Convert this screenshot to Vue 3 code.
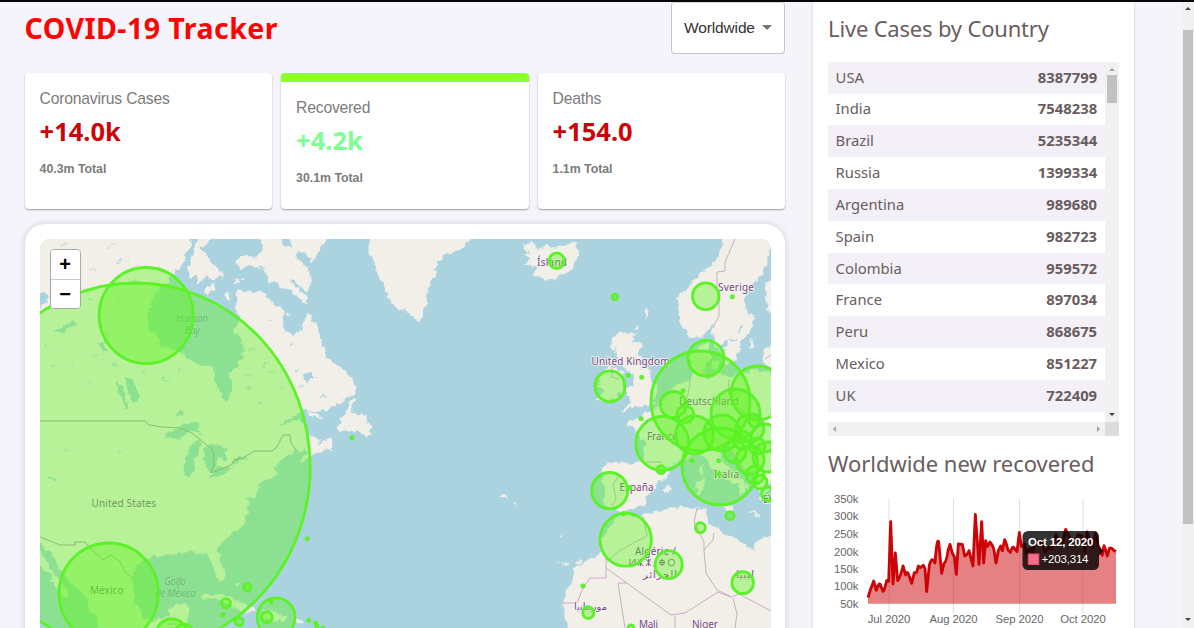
<script setup>
const stats = [
  { title: 'Coronavirus Cases', value: '+14.0k', total: '40.3m Total', kind: 'cases' },
  { title: 'Recovered', value: '+4.2k', total: '30.1m Total', kind: 'recovered' },
  { title: 'Deaths', value: '+154.0', total: '1.1m Total', kind: 'deaths' },
]
const countries = [
  ['USA', 8387799], ['India', 7548238], ['Brazil', 5235344], ['Russia', 1399334],
  ['Argentina', 989680], ['Spain', 982723], ['Colombia', 959572], ['France', 897034],
  ['Peru', 868675], ['Mexico', 851227], ['UK', 722409], ['South Africa', 703793],
]
// cx, cy, rx, ry
const circles = [
  [135.5, 467, 174.7, 184], [146.2, 315.5, 47, 48], [108.7, 593.5, 49.7, 50.5],
  [171.7, 635, 16, 16], [184, 633, 9, 9], [247.3, 587.3, 3.7, 3.7], [226, 603.3, 4.6, 4.6],
  [239.3, 621.7, 4, 4], [276, 617.3, 19, 19.5], [266.7, 617.3, 5.5, 5.5],
  [556.7, 260.7, 7.6, 7.8], [615, 297, 2.8, 2.8], [610, 386.3, 15, 15.5], [705.7, 296.3, 13.2, 13.4],
  [706, 358.3, 18, 18], [700.5, 401, 49.5, 50], [758, 393, 27, 27], [735.5, 414, 24.5, 25],
  [673.3, 404.5, 13, 13], [685.3, 414.3, 8.5, 8.5], [662.3, 443.5, 26.5, 27], [694.5, 435, 19, 19],
  [720, 466.5, 38, 38.5], [722, 433, 18, 18], [735, 451.7, 11, 11], [750, 460, 14, 14],
  [750, 428, 14, 14], [765, 438, 14, 14], [768, 457, 15, 15], [755, 475, 9, 9], [760, 482, 7, 7],
  [757, 446, 8, 8], [755, 421, 6, 6], [742, 440, 9, 9],
  [768, 494, 6.5, 7], [609.7, 490.7, 18, 18.2], [661, 469.7, 4, 4], [625.7, 539.7, 25.7, 26.5],
  [668.7, 564.7, 13.5, 14], [700.3, 527.7, 5, 5], [730, 515.7, 4, 4], [742.7, 582.7, 10.8, 11],
  [588.3, 612.7, 5.6, 5.8], [631, 628, 3, 3],
]
const dots = [
  [223, 614.7], [271, 602], [308.7, 620.3], [315.5, 623], [317, 626], [322.7, 628], [307.3, 538.7],
  [352, 437.7], [732.3, 296.7], [683, 390.7], [628.3, 375.3], [641.7, 377.3], [641, 418.7],
  [630, 487.7], [623.3, 513.7], [583, 586], [692, 460.7], [718.7, 460.7], [719, 474],
]
const lakes = [
  'M53 333l10-6 8-5 7 3-8 2-10 7-3-1z', 'M125 378l6 0 7 13 0 10-6 2-4-10z', 'M117 380l5 8 7 22-3-2-8-18z',
  'M162 439l9-8 14-7 12 0 4 11-8-5-14 7-5 1z', 'M189 447l8-6 5 1-5 9-4 22-6 3-4-6z',
  'M204 447l9-3 13 3 0 14-8-6-2 16-8 1-4-8z', 'M209 475l12-8 12 0-10 8-13 3z', 'M231 461l10-4 7 1-9 5-8 2z',
  'M48 475l7 4 0 4-6-4z', 'M178 410l5 2-2 6-4-3z', 'M303 375l7-2 5 5-6 1-4 6z', 'M99 345l6 8 3-2-5-11z',
]
const specks = [
  [60, 247, 8], [90, 270, 5], [106, 248, 9], [118, 263, 12], [134, 268, 7], [130, 281, 9], [152, 270, 10],
  [88, 300, 5], [96, 316, 6], [119, 299, 5], [131, 301, 4], [70, 363, 4], [86, 385, 5], [112, 365, 5],
  [141, 373, 5], [160, 380, 8], [178, 371, 4], [248, 350, 8], [262, 366, 7], [247, 389, 7], [266, 374, 9],
  [281, 366, 6], [257, 404, 5], [279, 388, 5], [267, 322, 5], [289, 344, 4], [298, 388, 4], [320, 396, 6],
  [64, 450, 4], [117, 453, 5], [92, 358, 5], [45, 345, 4], [51, 366, 3], [104, 332, 5], [296, 370, 4], [245, 376, 6],
]
const yTicks = [['350k', 503], ['300k', 520], ['250k', 537.5], ['200k', 555.5], ['150k', 573], ['100k', 590], ['50k', 607.7]]
const xTicks = [['Jul 2020', 889, 42.5], ['Aug 2020', 953.5, 48], ['Sep 2020', 1019.5, 48], ['Oct 2020', 1083, 45.5]]
const line = 'M204 563Q210 540 221 513L229 541Q237 515 241 524L249 544Q254 540 260 512L266 514 272 335 279 522 286 429 293 512Q300 505 309 468L317 495Q322 480 326 494L335 520 343 488 350 487 355 468 361 473 370 466 375 475 380 545 388 466Q394 445 399 450L405 459Q411 380 416 396L425 490 432 460Q440 455 444 422L450 403 457 430 463 440 469 493 475 402 487 403 494 438Q503 435 507 422L519 468 526 313 537 463 545 335 551 459 557 392 563 409 570 396Q578 405 582 420L588 459 595 422 602 408 607 422 614 389Q620 402 624 420L631 427Q638 405 642 414L651 425 658 367 664 410 674 402 680 430 690 415 698 425 709 388 716 405 725 395 735 425 745 412 755 418 768 374 778 400 788 396 797 358 807 378 815 400 825 398 835 374 845 378 855 425 861 366 870 400 878 410 887 368 894 405 901 420 907 436 912 407 916 417 922 438 928 415Q935 412 940 420L948 425'
</script>

<template>
  <div class="page">
    <div class="app">
      <main class="left">
        <header class="header">
          <h1>COVID-19 Tracker</h1>
          <div class="select">
            <span>Worldwide</span>
            <i class="caret"></i>
          </div>
        </header>

        <section class="stats">
          <article v-for="s in stats" :key="s.title" class="card stat" :class="s.kind">
            <p class="stat-title">{{ s.title }}</p>
            <h2>{{ s.value }}</h2>
            <p class="stat-total">{{ s.total }}</p>
          </article>
        </section>

        <section class="map-card">
          <div class="map">
            <svg viewBox="40 239 731 389" width="731" height="389">
              <defs>
                <filter id="coast" filterUnits="userSpaceOnUse" x="30" y="230" width="750" height="410">
                  <feTurbulence type="fractalNoise" baseFrequency="0.14" numOctaves="3" seed="4" />
                  <feDisplacementMap in="SourceGraphic" scale="8" xChannelSelector="R" yChannelSelector="G" />
                </filter>
              </defs>
              <rect x="40" y="239" width="731" height="389" fill="#aad3df" />
              <g class="land" filter="url(#coast)">
                <path d="M32 231H192V239L186 254 181 264 177 270 170 277 160 287 152 300 148 313 148 330 157 335 160 348 168 347 187 357 200 367 213 367 214 383 220 392 227 402 233 393 230 373 235 368 243 358 244 348 241 340 235 333 235 327 240 318 235 308 238 303 237 292 241 290 247 292 260 292 266 295 270 300 275 306 280 308 283 314 281 328 287 331 293 336 302 328 304 320 308 313 312 321 317 330 320 340 323 345 325 354 328 360 338 366 347 373 355 383 355 393 346 397 337 403 328 410 302 410 290 417 277 427 292 421 300 420 305 430 308 441 318 445 332 438 330 448 312 455 304 462 300 459 308 450 297 450 283 458 275 467 278 475 267 480 258 483 255 498 248 495 247 503 248 511 246 520 240 527 227 538 218 548 220 562 225 572 223 582 217 577 212 562 208 553 200 552 192 551 183 551 173 555 163 555 153 557 143 558 135 568 132 585 133 602 143 617 153 622 165 618 168 617 172 607 188 603 187 618 182 638H105L100 628 92 612 88 600 83 592 72 584 63 575 58 565 52 555 40 543 32 535Z" />
                <path d="M36 548L48 563 53 573 62 584 68 595 65 596 56 586 51 575 36 560Z" />
                <path d="M367 231L369 249 375 263 378 274 382 283 389 297 397 308 408 312 418 320 423 317 426 301 428 290 434 277 437 263 447 252 458 251 470 239 474 231Z" />
                <path d="M259 231L264 250 256 257 240 256 236 263 239 270 250 265 263 267 268 280 279 284 292 292 305 302 307 303 306 297 297 289 289 280 292 279 306 292 310 277 308 268 297 257 296 251 307 255 313 262 320 249 325 239V231H288L292 250 283 245 281 231Z" />
                <path d="M200 231H214L212 239 204 245 200 250 207 257 215 267 224 275 216 279 206 276 199 284 197 275 190 278 188 270 192 258 194 251Z" />
                <path d="M205 293l3-7 7-2-3 6-6 5zM225 297l2-6 3 5-2 5zM235 281l3-2-1 4zM241 279l3 0-2 2zM287 313l3-1 0 4z" />
                <path d="M309 411l8 3 6 5-7-1-8-4zM310 435l7 6 3-1-3 4-7 0z" />
                <path d="M351 400L355 398 350 413 359 416 366 415 367 424 372 427 368 439 364 433 356 432 338 430 341 420 345 415Z" />
                <path d="M201 598l9-4 15 3 15 6 16 7-11 1-18-8-12-5zM239 610l14-3 4 4-10 1zM264 610l11 3 13 6-8 2-17-3zM296 620l6 0-1 2-5-1zM235 582l2 4 1-2z" />
                <path d="M523 245L532 242 537 252 547 247 555 249 567 245 575 242 579 253 573 267 563 275 553 280 543 278 533 275 537 268 525 263 533 260 523 253 530 253Z" />
                <path d="M622 333L635 333 632 342 642 343 640 350 637 353 643 358 647 367 651 374 652 383 657 385 657 392 652 399 653 403 640 407 632 405 622 412 628 404 633 400 625 395 630 387 634 385 633 375 626 369 622 363 617 353 615 337Z" />
                <path d="M600 375L606 369 615 367 624 373 622 392 615 398 605 402 596 400 603 390 598 384Z" />
                <path d="M613 337l5-3-2 6-2 12-2-5zM645 311l4-2-1 6-2 3zM635 327l4-1-2 3z" />
                <path d="M727 231L718 257 709 269 700 275 690 287 678 297 680 320 690 337 698 338 707 330 713 323 714 337 717 347 723 360 728 364 737 357 740 343 753 327 753 320 745 307 745 298 750 287 760 276 767 263 767 251 779 243V231Z" />
                <path d="M779 276l-12 9-1 11 2 14 11 8zM779 342l-15 8-1 12 16 8zM749 346l4-6-1 7-3 2z" />
                <path d="M697 374L691 366 690 353 698 348 708 342 707 350 712 358 706 363 703 374ZM711 363l8-3-1 9-6-1z" />
                <path d="M779 375L757 370 743 372 733 378 717 374 707 379 698 373 690 378 680 383 670 390 662 402 657 408 640 417 630 420 627 424 638 432 645 442 645 462 630 464 610 462 603 467 605 482 603 498 607 507 613 508 623 511 640 508 648 497 653 488 660 480 670 475 665 468 675 463 688 458 693 453 703 455 713 468 725 478 737 485 742 497 745 485 750 488 740 478 733 472 724 462 718 453 720 446 727 445 737 458 753 475 757 488 763 502 767 485 779 480Z" />
                <path d="M722 506l11 -1-2 8zM698 480l6 0-1 12-5 1zM699 470l3-5 1 10-2 2zM663 490l6-3 2 1-6 4zM749 512l12 2-5 1z" />
                <path d="M620 513L630 517 640 516 653 513 670 508 697 508 707 508 705 514 709 522 720 532 740 542 753 550 757 540 779 533V638H566L566 615 563 603 568 590 573 580 576 570 583 563 600 553 602 538 611 526Z" />
                <path d="M499 496l4-1 4 2-5 1zM515 503l3 0-1 2zM560 535l3 0-1 1zM557 562l2 3zM563 564l4 0-2 2zM577 561l4-2-3 6z" />
              </g>
              <g fill="#aad3df" filter="url(#coast)">
                <path v-for="(d, i) in lakes" :key="i" :d="d" />
                <path d="M722 345l6-4-1 7-5 3zM739 325l3-2-1 10-3 2zM731 337l6 2-4 2zM36 295l8-3 5 4-5 8-8 5z" />
              </g>
              <g class="specks" filter="url(#coast)">
                <path v-for="([x, y, w], i) in specks" :key="i" :d="`M${x} ${y}l${w * .5} ${-w * .25} ${w * .5} ${i % 2 ? 2 : -1}`" />
              </g>
              <g class="border">
                <path class="grey" d="M40 421H145L149 425 162 427 180 428 192 433 202 441 213 450 214 464 211 473 231 465 234 460 243 458 254 451 272 451 277 447 283 435 290 435 291 443 296 450M40 537L60 545H75V542H85L92 550 103 560 111 555 120 562 126 573 133 578M168 624H177" />
                <path d="M735 239L725 262 725 271 717 272 717 288 719 300 719 316 713 327M612 366V377L619 379M690 379L688 395 683 408 692 425M729 379L728 391 734 407 745 412M771 355L765 359M619 475L613 485 616 499 612 506M662 462L645 462M643 516L647 536 633 543 618 552 607 562M697 508L694 522 704 542 704 550 713 540 714 533M704 550L706 573 717 590 730 596M606 559V578H590L583 588 577 603H563M606 568L671 615 685 613 718 592 731 597 739 594 771 611M675 616V628M733 598L737 614 735 628M618 583L625 628M618 583H626" />
              </g>
              <g class="labels">
                <text x="176" y="322" class="sea" textLength="32">Hudson</text>
                <text x="185" y="333.500" class="sea" textLength="15">Bay</text>
                <text x="91.500" y="506.500" class="muted" textLength="64.500">United States</text>
                <text x="90" y="594" class="muted" textLength="33.500">México</text>
                <text x="164" y="585" class="sea" textLength="22">Golfo</text>
                <text x="155" y="596.500" class="sea" textLength="41">de México</text>
                <text x="537" y="265.500" textLength="30">Ísland</text>
                <text x="718" y="290.500" textLength="36">Sverige</text>
                <text x="591.500" y="365.300" textLength="78">United Kingdom</text>
                <text x="679" y="404.700" textLength="60">Deutschland</text>
                <text x="647" y="440" textLength="31">France</text>
                <text x="619.500" y="491.300" textLength="34">España</text>
                <text x="714" y="477.500" textLength="25">Italia</text>
                <text x="635" y="555" textLength="41">Algérie /</text>
                <g class="tifinagh">
                  <path d="M630 559v7M635 559v7M630 566l5-7M638 559l5 7M643 559l-5 7M640.500 559v7M646 559l5 7M651 559l-5 7M648.500 559v7M653 566h2M662 559v7M659 562.500h6" />
                  <circle cx="662" cy="562.500" r="2.500" /><circle cx="671.500" cy="562.500" r="3.200" />
                </g>
                <text x="643" y="577.500" textLength="34">الجزائر</text>
                <text x="574" y="609.500" textLength="33">موريتانيا</text>
                <text x="736" y="577.500" textLength="18">ليبيا</text>
                <text x="639" y="628.300" textLength="19">Mali</text>
                <text x="692" y="628.300" textLength="26">Niger</text>
                <text x="763" y="503" textLength="24">Ελλάς</text>
              </g>
              <g class="circles">
                <ellipse v-for="([cx, cy, rx, ry], i) in circles" :key="i" :cx="cx" :cy="cy" :rx="rx" :ry="ry" />
              </g>
              <circle v-for="([x, y], i) in dots" :key="i" :cx="x" :cy="y" r="2.500" fill="#5bf228" />
            </svg>
            <div class="zoom">
              <button>+</button>
              <button>−</button>
            </div>
          </div>
        </section>
      </main>

      <aside class="side">
        <h3>Live Cases by Country</h3>
        <div class="table-wrap">
          <div class="rows">
            <div v-for="[name, n] in countries" :key="name" class="row">
              <span>{{ name }}</span><strong>{{ n }}</strong>
            </div>
          </div>
          <div class="vbar">
            <i class="tri up pale"></i>
            <i class="thumb"></i>
            <i class="tri down end"></i>
          </div>
          <div class="hbar"><i class="tri lft"></i><i class="tri rgt"></i></div>
          <div class="corner"></div>
        </div>
        <h3 class="second">Worldwide new recovered</h3>
        <svg class="chart" viewBox="828 490 291 138" width="291" height="138">
          <path class="grid" d="M889 499V613M953.500 499V613M1019.500 499V613M1083 499V613" />
          <g transform="translate(800 410) scale(.33333)">
            <path :d="line + 'V581H204Z'" class="area" />
            <path :d="line" class="line" />
          </g>
          <g class="ticks">
            <text v-for="[t, y] in yTicks" :key="t" x="858.500" :y="y" text-anchor="end">{{ t }}</text>
            <text v-for="[t, x, w] in xTicks" :key="t" :x="x" y="623.300" text-anchor="middle" :textLength="w">{{ t }}</text>
          </g>
          <g class="tip">
            <rect x="1022.500" y="531" width="76.500" height="39" rx="5.500" />
            <path d="M1099 546.500l4.500 4.500-4.500 4.500z" />
            <text x="1028" y="545.500" class="bold" textLength="65.500">Oct 12, 2020</text>
            <rect x="1028.300" y="554" width="10.500" height="10.500" class="swatch" />
            <text x="1041.500" y="562.500" textLength="47">+203,314</text>
          </g>
        </svg>
      </aside>
    </div>
    <div class="page-scroll">
      <i class="tri up"></i>
      <i class="page-thumb"></i>
      <i class="tri down"></i>
    </div>
  </div>
</template>

<style>
html, body { margin: 0; overflow: hidden; }
</style>

<style scoped>
* { box-sizing: border-box; }
.page { display: flex; width: 1194px; height: 628px; overflow: hidden; background: #f5f4fa; border-top: 2px solid #0a0708; font-family: "Liberation Sans", Arial, sans-serif; }
.app { flex: 1; display: flex; gap: 28px; padding-left: 24.600px; align-items: flex-start; }
.left { width: 760.500px; }
.header { display: flex; justify-content: space-between; height: 70.600px; }
h1, h2, h3, p { margin: 0; }
h1, h2, h3, .rows { font-family: "Noto Sans", "Open Sans", sans-serif; }
h1 { color: #fc0404; font-size: 28.500px; line-height: 38px; letter-spacing: .46px; padding-top: 7px; }
.select { width: 114.500px; height: 51.600px; border: 1px solid #c5c4c8; border-top-color: #d8d7dc; border-radius: 4px; background: #fff; color: #333; font-size: 15.500px; letter-spacing: -.15px; display: flex; align-items: center; justify-content: space-between; padding: 0 12px 0 12.500px; }
.caret { border: 5px solid transparent; border-top-color: #757575; border-bottom: 0; }
.stats { display: grid; grid-template-columns: repeat(3, 1fr); gap: 9px; }
.card { height: 136.500px; background: #fff; border-radius: 4px; box-shadow: 0 1px 2px rgba(0, 0, 0, .28), 0 1px 1px rgba(0, 0, 0, .1); }
.stat { padding: 15px; }
.recovered { border-top: 9.500px solid #8fff28; }
.stat-title { color: #7b7b7b; font-size: 15.700px; letter-spacing: -.2px; line-height: 21px; }
.stat h2 { color: #cc0408; font-size: 25.500px; line-height: 30px; margin-top: 7px; }
.recovered h2 { color: #7dff91; }
.stat-total { color: #7b7b7b; font-size: 12.300px; font-weight: bold; line-height: 16px; margin-top: 15px; }
.map-card { margin-top: 15px; height: 450px; padding: 15px 15px 0; background: #fff; border-radius: 20px; box-shadow: 0 0 7px rgba(0, 0, 0, .16); }
.map { position: relative; width: 731px; height: 389px; border-radius: 11px 11px 0 0; overflow: hidden; }
.map svg { display: block; }
.land { fill: #f2efe9; stroke: #f2efe9; stroke-width: .8; stroke-linejoin: round; }
.specks { fill: none; stroke: #c0d9de; stroke-width: 1.200; }
.border { fill: none; stroke: #c3a5c0; stroke-width: .9; }
.border .grey { stroke: #a28f9d; }
.labels { font: 10px "Noto Sans", "DejaVu Sans", sans-serif; fill: #724a80; paint-order: stroke; stroke: #f5f1f2; stroke-width: 1.800; stroke-linejoin: round; }
.labels .sea { fill: #6a91b0; font-style: italic; stroke: #c6dde4; stroke-width: 1; }
.labels .muted { fill: #7c5b7c; stroke-width: 1; }
.tifinagh { fill: none; stroke: #846390; stroke-width: 1; }
.circles { fill: #5ff61e; fill-opacity: .4; stroke: #5bf228; stroke-width: 2.800; }
.zoom { position: absolute; left: 10px; top: 10px; width: 31px; height: 60px; border: 1.500px solid #a9aaa5; border-radius: 4px; background: #fff; overflow: hidden; display: flex; flex-direction: column; }
.zoom button { flex: 1; border: 0; padding: 0; background: #fff; color: #000; font: bold 20px "Liberation Sans", sans-serif; line-height: 28px; }
.zoom button + button { border-top: 1px solid #ccc; }
.side { width: 321px; height: 640px; padding: 0 15px; background: #fff; border-radius: 4px; box-shadow: 0 1px 3px rgba(0, 0, 0, .22); }
h3 { color: #6a5d5d; font-weight: 400; font-size: 22px; letter-spacing: -.19px; line-height: 30px; padding-top: 11px; height: 59.700px; white-space: nowrap; }
.table-wrap { display: grid; grid-template-columns: 276.500px 14px; grid-template-rows: 360px 14px; width: 290.500px; }
.rows { overflow: hidden; color: #6a5d5d; font-size: 14.800px; }
.row { height: 31.830px; display: flex; justify-content: space-between; align-items: center; padding: 0 7.500px 2px; }
.row:nth-child(odd) { background: #f3f0f8; }
.vbar { background: #f1f1f1; display: flex; flex-direction: column; align-items: center; padding: 6px 0; }
.tri { width: 0; height: 0; border: 3.500px solid transparent; }
.up { border-top: 0; border-bottom-color: #444; }
.down { border-bottom: 0; border-top-color: #444; }
.pale { border-bottom-color: #a3a3a3; }
.lft { border-left: 0; border-right-color: #a3a3a3; }
.rgt { border-right: 0; border-left-color: #a3a3a3; }
.thumb { width: 10px; height: 28px; margin-top: 4.500px; background: #c1c1c1; }
.end { margin-top: auto; }
.hbar { background: #f1f1f1; display: flex; justify-content: space-between; align-items: center; padding: 0 5px; }
.corner { background: #dcdcdc; }
.second { height: 54.300px; padding-top: 12px; letter-spacing: -.05px; }
.chart { display: block; font-family: "Liberation Sans", Arial, sans-serif; }
.grid { stroke: #dedede; stroke-width: 1; }
.area { fill: #cc0408; fill-opacity: .5; }
.line { fill: none; stroke: #cc0408; stroke-width: 8.500; stroke-linejoin: round; }
.ticks { fill: #666; font-size: 11.300px; }
.tip { fill: rgba(0, 0, 0, .8); font-size: 11.500px; }
.tip text { fill: #fff; }
.tip .bold { font-weight: bold; }
.swatch { fill: #f0718f; stroke: #f04e70; stroke-width: 1; }
.page-scroll { width: 12.500px; background: #f1f1f1; display: flex; flex-direction: column; align-items: center; padding: 5px 0 7px; }
.page-thumb { width: 10px; height: 494px; margin-top: 19.500px; background: #c1c1c1; }
.page-scroll .down { margin-top: auto; }
</style>
